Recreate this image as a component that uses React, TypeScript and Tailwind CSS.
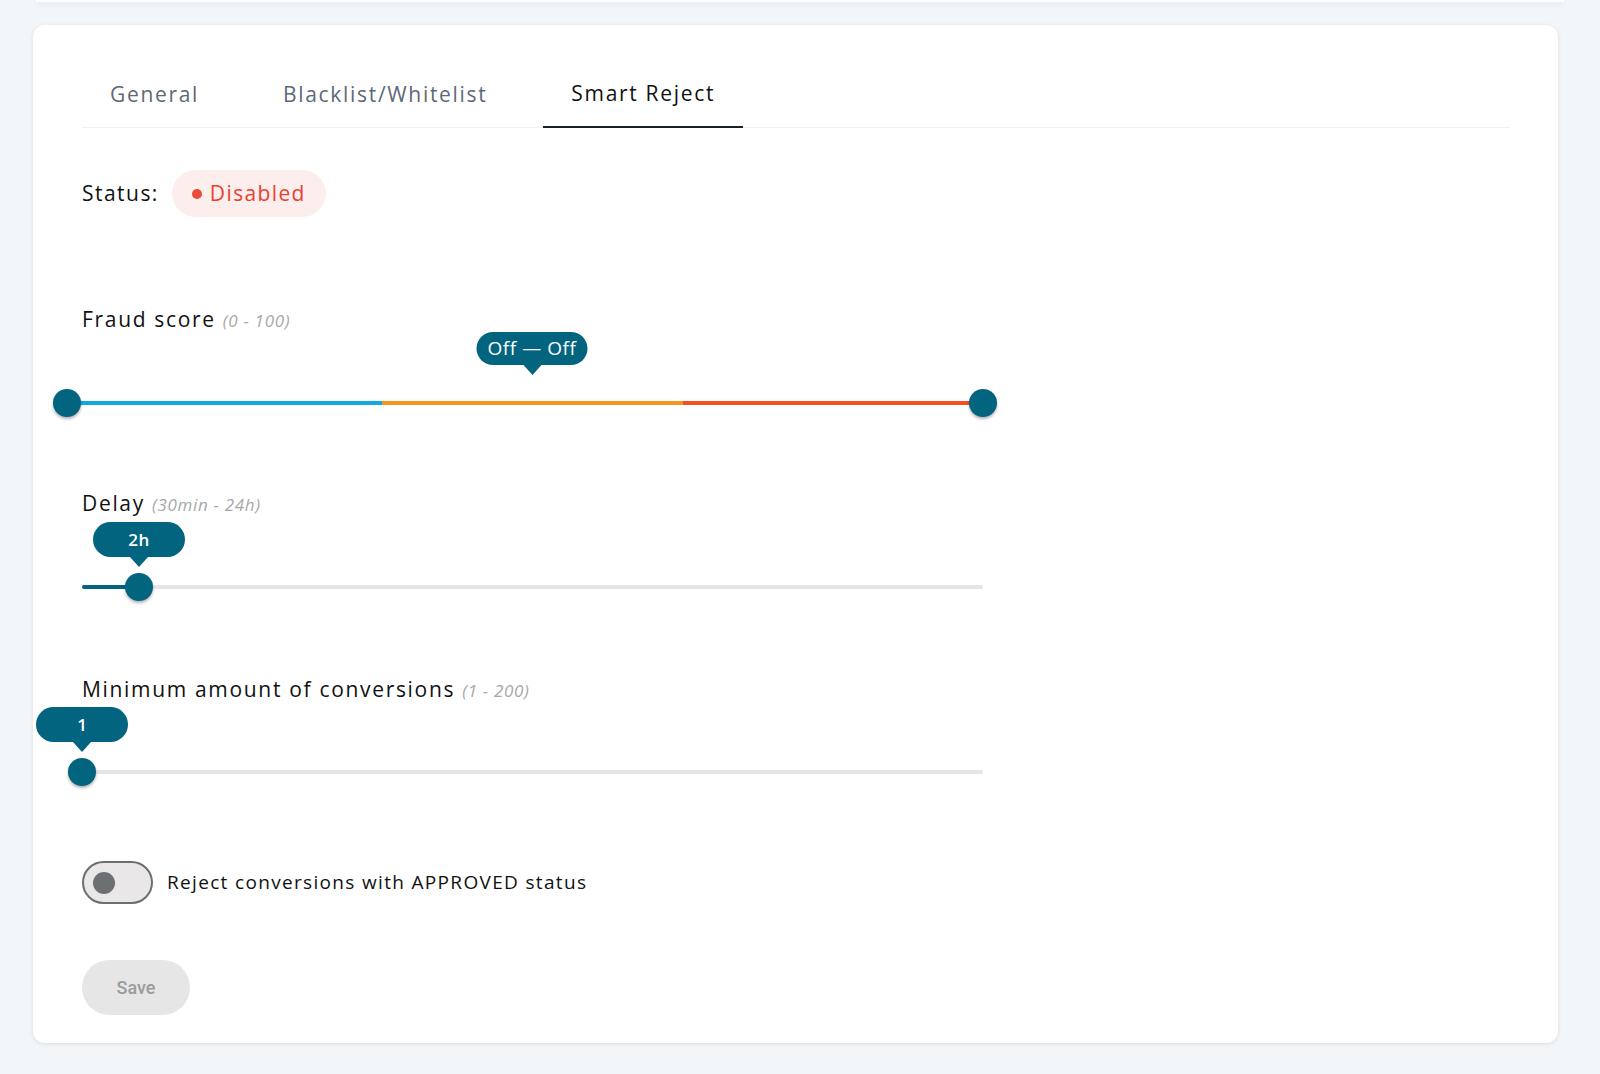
import React from 'react';

const sans = "font-['Open_Sans',sans-serif]";

const tabs = [
  { name: 'General', active: false },
  { name: 'Blacklist/Whitelist', active: false },
  { name: 'Smart Reject', active: true },
];

// speech-bubble above a slider thumb
const Bubble = ({ label, left, top, width, height, textClass }: { label: string; left: number; top: number; width: number; height: number; textClass: string }) => (
  <div className="absolute -translate-x-1/2 flex flex-col items-center" style={{ left, top }}>
    <div
      className={`flex items-center justify-center rounded-full bg-[#02647f] text-white ${textClass}`}
      style={{ width, height }}
    >
      {label}
    </div>
    <div className="w-0 h-0 border-x-[9px] border-x-transparent border-t-[10px] border-t-[#02647f]" />
  </div>
);

const Thumb = ({ left, top }: { left: number; top: number }) => (
  <div
    className="absolute w-7 h-7 rounded-full bg-[#02647f] shadow-[0_2px_3px_rgba(0,0,0,0.3)]"
    style={{ left, top }}
  />
);

const Label = ({ title, hint }: { title: string; hint: string }) => (
  <div className="flex items-baseline h-6 leading-6">
    <span className="text-[21px] text-[#111] tracking-[0.08em]">{title}</span>
    <span className="ml-[7px] text-[17px] italic text-[#a8a8a8] tracking-[0.04em]">{hint}</span>
  </div>
);

export default function App() {
  return (
    <div className={`min-h-[1074px] bg-[#f3f6f9] ${sans}`}>
      {/* header strip above */}
      <div className="mx-[36px] h-[2px] bg-white shadow-[0_2px_6px_rgba(0,0,0,0.1)]" />

      <div className="ml-[33px] mt-[23px] w-[1525px] rounded-xl bg-white shadow-[0_1px_4px_rgba(0,0,0,0.1)] pt-[33px] pl-[49px] pr-[48px] pb-[28px]">
        {/* Tabs */}
        <div className="flex gap-[28px] border-b border-[#f1f1f1]">
          {tabs.map((t) => (
            <div
              key={t.name}
              className={`h-[70px] px-7 pt-[3px] flex items-center text-[21px] tracking-[0.08em] -mb-px ${
                t.active ? 'text-[#111] border-b-2 border-[#17202b]' : 'text-[#5d6978]'
              }`}
            >
              {t.name}
            </div>
          ))}
        </div>

        {/* Status */}
        <div className="mt-[42px] flex items-center h-[47px]">
          <span className="text-[21px] text-[#111] tracking-[0.07em]">Status:</span>
          <div className="ml-[13px] h-[47px] px-[20px] rounded-full bg-[#fdeeee] flex items-center gap-[8px]">
            <span className="w-[10px] h-[10px] rounded-full bg-[#e84a3c]" />
            <span className="text-[21px] text-[#e8412f] tracking-[0.065em]">Disabled</span>
          </div>
        </div>

        {/* Fraud score */}
        <div className="mt-[90px]">
          <Label title="Fraud score" hint="(0 - 100)" />
          <div className="relative ml-[-15px] w-[916px] pt-[70px]">
            <Bubble label="Off — Off" left={465} top={1} width={111} height={33} textClass="text-[19px] tracking-[0.03em]" />
            <div className="flex h-1">
              <div className="w-[315px] bg-[#12a9df]" />
              <div className="w-[301px] bg-[#f7931e]" />
              <div className="flex-1 bg-[#f4511e]" />
            </div>
            <Thumb left={-14} top={58} />
            <Thumb left={902} top={58} />
          </div>
        </div>

        {/* Delay */}
        <div className="mt-[86px]">
          <Label title="Delay" hint="(30min - 24h)" />
          <div className="relative w-[901px] pt-[70px]">
            <Bubble label="2h" left={57} top={7} width={92} height={35} textClass="text-[17px] font-semibold tracking-[0.03em]" />
            <div className="h-1 rounded-full bg-[#e6e4e4]">
              <div className="h-1 w-[57px] rounded-full bg-[#02647f]" />
            </div>
            <Thumb left={43} top={58} />
          </div>
        </div>

        {/* Minimum amount of conversions */}
        <div className="mt-[88px]">
          <Label title="Minimum amount of conversions" hint="(1 - 200)" />
          <div className="relative w-[901px] pt-[69px]">
            <Bubble label="1" left={0} top={6} width={92} height={35} textClass="text-[17px] font-semibold" />
            <div className="h-1 rounded-full bg-[#e6e4e4]" />
            <Thumb left={-14} top={57} />
          </div>
        </div>

        {/* Toggle */}
        <div className="mt-[87px] flex items-center">
          <div className="w-[71px] h-[43px] rounded-full border-2 border-[#6b6f70] bg-[#e9e7e7] flex items-center pl-[9px]">
            <div className="w-[22px] h-[22px] rounded-full bg-[#6c7072]" />
          </div>
          <span className="ml-[14px] text-[19px] text-[#111] tracking-[0.07em]">
            Reject conversions with APPROVED status
          </span>
        </div>

        {/* Save */}
        <button className="mt-[56px] w-[108px] h-[55px] rounded-full bg-[#e6e6e6] text-[#9b9b9b] text-[18px] font-medium font-['Roboto',sans-serif]">
          Save
        </button>
      </div>
    </div>
  );
}
